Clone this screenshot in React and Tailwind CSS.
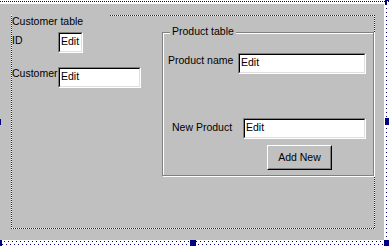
const font = { fontFamily: '"Liberation Sans", Arial, sans-serif' };

function Edit({ w }) {
  return (
    <div className={`${w} h-[21px] border border-t-[#808080] border-l-[#808080] border-b-white border-r-white`}>
      <div className="h-full border border-t-black border-l-black border-b-[#dfdfdf] border-r-[#dfdfdf] bg-white pl-px pt-px leading-[13px]">
        Edit
      </div>
    </div>
  );
}

export default function App() {
  return (
    <div className="relative w-[389px] h-[246px] bg-white text-[10.5px] leading-[13px] text-black" style={font}>
      {/* top hatch */}
      <div className="h-[4px] pt-px">
        <div className="h-px bg-[repeating-linear-gradient(90deg,#000080_0_1px,transparent_1px_2px)]" />
      </div>

      <div className="flex h-[236px]">
        {/* form body */}
        <div className="w-[384px] h-full bg-[#c0c0c0] pl-[11px] pt-[11px]">
          {/* Customer table panel, dotted selection frame */}
          <div className="w-[364px] h-[214px] p-px bg-[repeating-conic-gradient(#0000ff_0_25%,#ffffff_0_50%)] bg-[length:2px_2px]">
            <div className="flex h-full bg-[#c0c0c0]">
              <div className="w-[150px] flex flex-col">
                <div className="w-[98px] h-[13px] -mt-px bg-[#c0c0c0]">Customer table</div>
                <div className="flex mt-[4px]">
                  <div className="w-[46px] mt-[2px]">ID</div>
                  <Edit w="w-[25px]" />
                </div>
                <div className="flex mt-[14px]">
                  <div className="w-[46px]">Customer</div>
                  <Edit w="w-[83px]" />
                </div>
              </div>

              {/* Product table group box */}
              <div className="relative mt-[16px] w-[212px] h-[144px] border border-[#808080] shadow-[inset_1px_1px_0_#fff,1px_1px_0_#fff] flex flex-col">
                <div className="absolute left-[7px] top-[-8px] px-[2px] bg-[#c0c0c0]">Product table</div>
                <div className="flex mt-[20px] pl-[5px]">
                  <div className="w-[70px] mt-[1px]">Product name</div>
                  <Edit w="w-[128px]" />
                </div>
                <div className="flex mt-[44px] pl-[9px]">
                  <div className="w-[71px] mt-[3px]">New Product</div>
                  <Edit w="w-[123px]" />
                </div>
                <div className="mt-[6px] ml-[104px] w-[65px] h-[25px] border border-t-white border-l-white border-b-black border-r-black">
                  <div className="h-full flex items-center justify-center border border-t-[#c0c0c0] border-l-[#c0c0c0] border-b-[#808080] border-r-[#808080]">
                    Add New
                  </div>
                </div>
              </div>
            </div>
          </div>
        </div>

        {/* right hatch */}
        <div className="w-[5px] h-full pl-[2px]">
          <div className="w-px h-full bg-[repeating-linear-gradient(180deg,#000080_0_1px,transparent_1px_4px)]" />
        </div>
      </div>

      {/* bottom hatch */}
      <div className="h-[6px] pt-px flex flex-col gap-[2px]">
        <div className="h-px bg-[repeating-linear-gradient(90deg,#000080_0_1px,transparent_1px_4px)]" />
        <div className="h-px ml-[2px] bg-[repeating-linear-gradient(90deg,#000080_0_1px,transparent_1px_4px)]" />
      </div>

      {/* grab handles */}
      <div className="absolute left-[385px] top-0 w-[2px] h-[5px] bg-[#000080]" />
      <div className="absolute left-[385px] top-0 w-[4px] h-px bg-[#000080]" />
      <div className="absolute left-[385px] top-[118px] w-[4px] h-[7px] bg-[#000080]" />
      <div className="absolute left-0 top-[119px] w-px h-[6px] bg-[#000080]" />
      <div className="absolute left-0 top-[240px] w-[2px] h-[6px] bg-[#000080]" />
      <div className="absolute left-[190px] top-[240px] w-[6px] h-[6px] bg-[#000080]" />
      <div className="absolute left-[384px] top-[240px] w-[5px] h-[6px] bg-[#000080]" />
    </div>
  );
}
